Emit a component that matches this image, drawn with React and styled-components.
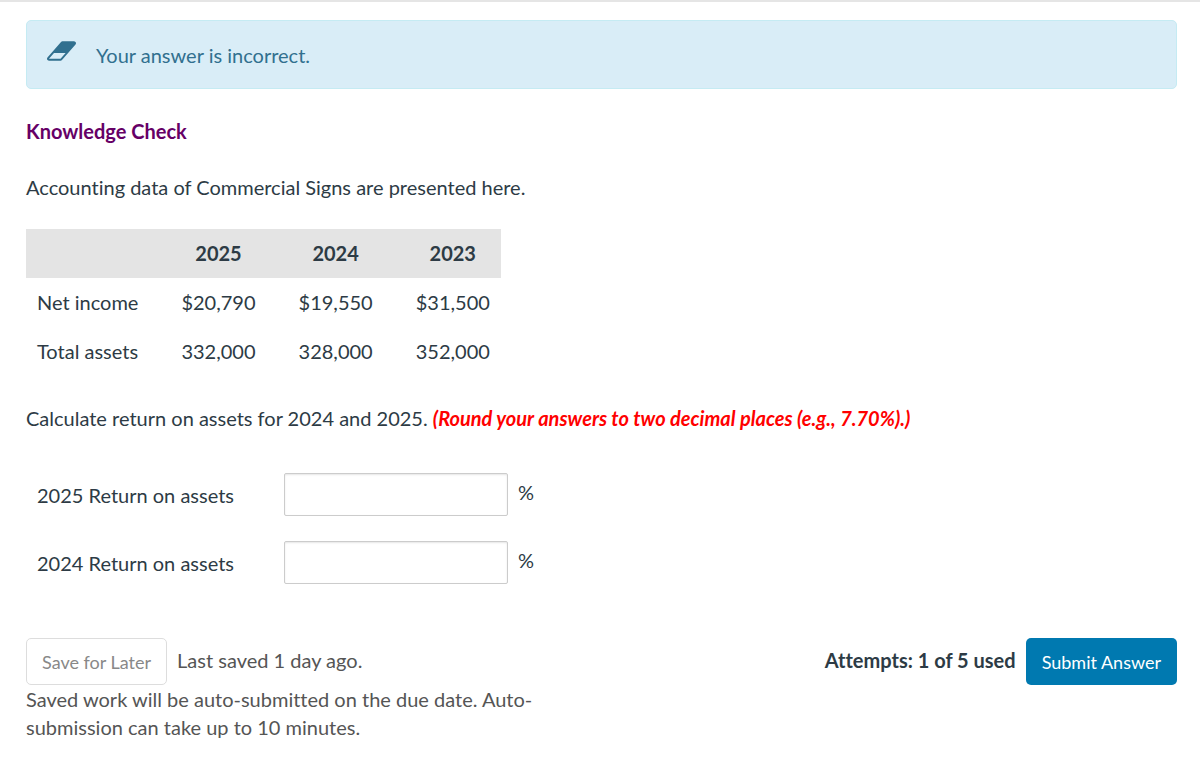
import React from "react";
import styled, { createGlobalStyle } from "styled-components";

const years = ["2025", "2024", "2023"];

const accounts = [
  { name: "Net income", values: ["$20,790", "$19,550", "$31,500"] },
  { name: "Total assets", values: ["332,000", "328,000", "352,000"] },
];

const App = () => {
  return (
    <>
      <GlobalStyle />
      <Page>
        <Alert role="alert">
          <EraserIcon viewBox="0 256 1920 1280" aria-hidden="true">
            <path d="M896 1408l336-384h-768l-336 384h768zm1013-1077q15 34 9.500 71.500t-30.500 65.500l-896 1024q-38 44-96 44h-768q-38 0-69.500-20.500t-47.500-54.500q-15-34-9.500-71.500t30.500-65.500l896-1024q38-44 96-44h768q38 0 69.500 20.500t47.500 54.500z" />
          </EraserIcon>
          <AlertText>Your answer is incorrect.</AlertText>
        </Alert>
        <Question>
          <Title>Knowledge Check</Title>
          <Paragraph>
            Accounting data of Commercial Signs are presented here.
          </Paragraph>
          <DataTable>
            <thead>
              <tr>
                <td></td>
                {years.map((year) => (
                  <th key={year} scope="col">
                    {year}
                  </th>
                ))}
              </tr>
            </thead>
            <tbody>
              {accounts.map(({ name, values }) => (
                <tr key={name}>
                  <td>{name}</td>
                  {values.map((value) => (
                    <td key={value}>{value}</td>
                  ))}
                </tr>
              ))}
            </tbody>
          </DataTable>
          <Paragraph>
            Calculate return on assets for 2024 and 2025.{" "}
            <Hint>
              (Round your answers to two decimal places (e.g., 7.70%).)
            </Hint>
          </Paragraph>
        </Question>
        <Answers>
          {["2025", "2024"].map((year) => (
            <AnswerRow key={year}>
              <AnswerLabel htmlFor={`roa-${year}`}>
                {year} Return on assets
              </AnswerLabel>
              <AnswerInput id={`roa-${year}`} type="text" />
              <Unit>%</Unit>
            </AnswerRow>
          ))}
        </Answers>
        <Footer>
          <Saving>
            <Actions>
              <SaveButton type="button">Save for Later</SaveButton>
              <Status>Last saved 1 day ago.</Status>
            </Actions>
            <Note>
              Saved work will be auto-submitted on the due date. Auto-submission
              can take up to 10 minutes.
            </Note>
          </Saving>
          <Actions>
            <Attempts>Attempts: 1 of 5 used</Attempts>
            <SubmitButton type="button">Submit Answer</SubmitButton>
          </Actions>
        </Footer>
      </Page>
    </>
  );
};

const GlobalStyle = createGlobalStyle`
  *, *::before, *::after {
    box-sizing: border-box;
  }

  body {
    margin: 0;
    background-color: #fff;
    color: #2d3b45;
    font-family: Lato, "Liberation Sans", sans-serif;
    font-size: 20px;
    font-variant-ligatures: none;
    line-height: 28px;
  }
`;

const Page = styled.main`
  padding: 18px 23px 18px 26px;
  border-top: 2px solid #e5e5e5;
`;

const Alert = styled.div`
  display: flex;
  align-items: flex-start;
  gap: 20px;
  padding: 20px 20px 19px;
  border: 1px solid #c5ebf3;
  border-radius: 5px;
  background-color: #d9edf7;
  color: #31708f;
`;

const EraserIcon = styled.svg`
  width: 29px;
  height: 20px;
  fill: currentColor;
`;

const AlertText = styled.p`
  margin: 0;
`;

const Question = styled.section`
  display: flex;
  flex-direction: column;
  align-items: flex-start;
  gap: 28px;
  padding-top: 28px;
`;

const Title = styled.h2`
  margin: 0;
  color: #660066;
  font-size: 20px;
  font-weight: 700;
`;

const Paragraph = styled.p`
  margin: 0;
`;

const Hint = styled.em`
  color: #ff0000;
  font-weight: 700;
`;

const DataTable = styled.table`
  border-collapse: collapse;

  thead {
    background-color: #e4e4e4;
  }

  th,
  td {
    height: 49px;
    padding: 0 11px 2px 32px;
    text-align: center;
  }

  td:first-child {
    padding-left: 11px;
    text-align: left;
  }
`;

const Answers = styled.div`
  display: flex;
  flex-direction: column;
  gap: 25px;
  padding: 41px 0 54px 11px;
`;

const AnswerRow = styled.div`
  display: flex;
  align-items: center;
`;

const AnswerLabel = styled.label`
  width: 247px;
`;

const AnswerInput = styled.input`
  width: 224px;
  height: 43px;
  padding: 0 10px;
  border: 1px solid #ccc;
  border-radius: 2px;
  box-shadow: inset 0 1px 2px #0000001a;
  font: inherit;
  color: inherit;
`;

const Unit = styled.span`
  padding: 0 0 5px 10px;
`;

const Footer = styled.footer`
  display: flex;
  justify-content: space-between;
  align-items: flex-start;
`;

const Saving = styled.div`
  width: 45%;
  color: #555;
`;

const Actions = styled.div`
  display: flex;
  gap: 10px;
`;

const Button = styled.button`
  height: 47px;
  padding: 0 15px;
  border: 1px solid transparent;
  border-radius: 5px;
  font: inherit;
  font-size: 18px;
  cursor: pointer;
`;

const SaveButton = styled(Button)`
  border-color: #ddd;
  background-color: #fff;
  color: #888;
`;

const SubmitButton = styled(Button)`
  background-color: #0079b0;
  color: #fff;
`;

const Status = styled.span`
  padding-top: 8px;
`;

const Attempts = styled(Status)`
  font-weight: 700;
`;

const Note = styled.p`
  margin: 0;
`;

export default App;
